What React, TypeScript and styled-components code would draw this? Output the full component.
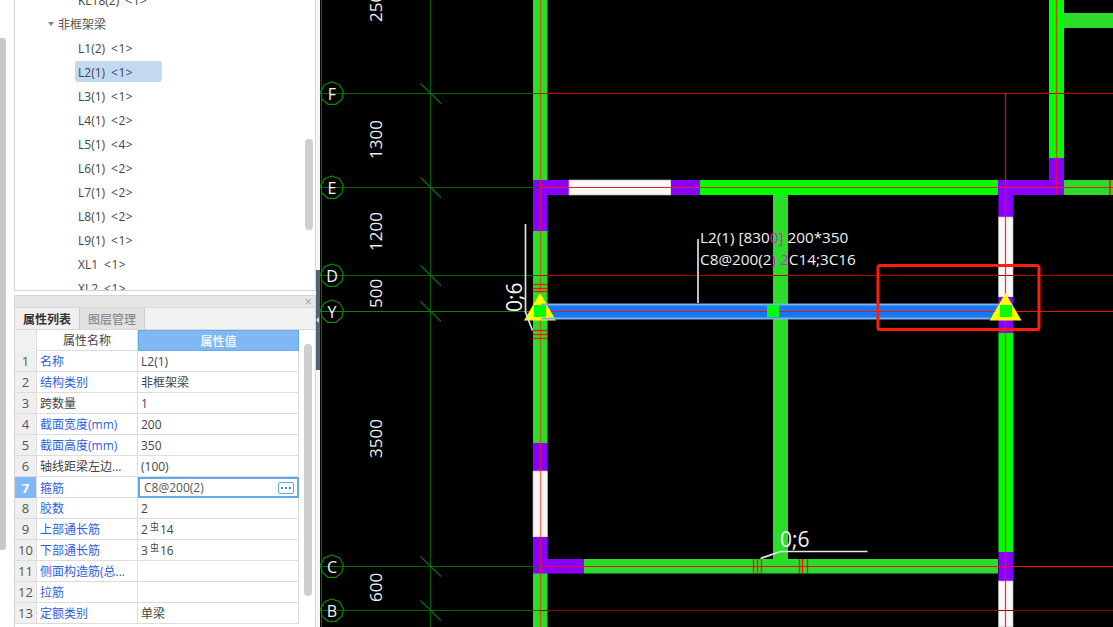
import React from "react";
import styled, { createGlobalStyle } from "styled-components";

const GlobalStyle = createGlobalStyle`
  html, body {
    margin: 0;
    padding: 0;
    width: 100%;
    height: 100%;
    overflow: hidden;
    background: #fff;
  }
  #root {
    height: 100%;
  }
`;

const UI_FONT = `"Open Sans", "Noto Sans CJK SC", sans-serif`;
const CAD_FONT = `"Open Sans", sans-serif`;

const GREEN = "#2bdc2b";
const LIME = "#00ff00";
const PURPLE = "#8a00ff";
const WHITE = "#f8f8f8";

const treeItems = [
  "L1(2)",
  "L2(1)",
  "L3(1)",
  "L4(1)",
  "L5(1)",
  "L6(1)",
  "L7(1)",
  "L8(1)",
  "L9(1)",
  "XL1",
  "XL2",
];
const treeCounts = [1, 1, 1, 2, 4, 2, 2, 2, 1, 1, 1];

type PropRow = { name: string; value?: React.ReactNode; plain?: boolean };

const Rebar = ({ count, size }: { count: number; size: number }) => (
  <>
    {count}
    <RebarMark>虫</RebarMark>
    {size}
  </>
);

const propRows: PropRow[] = [
  { name: "名称", value: "L2(1)" },
  { name: "结构类别", value: "非框架梁" },
  { name: "跨数量", value: "1", plain: true },
  { name: "截面宽度(mm)", value: "200" },
  { name: "截面高度(mm)", value: "350" },
  { name: "轴线距梁左边...", value: "(100)", plain: true },
  { name: "箍筋", value: "C8@200(2)" },
  { name: "胶数", value: "2" },
  { name: "上部通长筋", value: <Rebar count={2} size={14} /> },
  { name: "下部通长筋", value: <Rebar count={3} size={16} /> },
  { name: "侧面构造筋(总..." },
  { name: "拉筋" },
  { name: "定额类别", value: "单梁" },
];

// wall and beam pieces, page coordinates: [from, to, colour]
const leftWall: [number, number, string][] = [
  [0, 180, GREEN],
  [180, 231, PURPLE],
  [231, 443, GREEN],
  [443, 471, PURPLE],
  [471, 537, WHITE],
  [537, 573, PURPLE],
  [573, 627, GREEN],
];
const rightWall: [number, number, string][] = [
  [195, 217, PURPLE],
  [217, 297, WHITE],
  [297, 333, PURPLE],
  [333, 552, LIME],
  [552, 581, PURPLE],
  [581, 627, WHITE],
];
const beamE: [number, number, string][] = [
  [533, 569, PURPLE],
  [569, 671, WHITE],
  [671, 700, PURPLE],
  [700, 998, LIME],
  [998, 1064, PURPLE],
  [1064, 1113, GREEN],
];
const beamC: [number, number, string][] = [
  [533, 584, PURPLE],
  [584, 998, GREEN],
];

const axes = [
  { label: "F", y: 93.5 },
  { label: "E", y: 187.5 },
  { label: "D", y: 275.5 },
  { label: "Y", y: 311.5, bright: true },
  { label: "C", y: 566.5 },
  { label: "B", y: 610.5 },
];

const redLines = [
  { y: 93.5, color: "#c80000" },
  { y: 187.5, color: "#f02020" },
  { y: 275.5, color: "#b80000" },
  { y: 311.5, color: "#e00000" },
  { y: 566.5, color: "#e81010" },
  { y: 610.5, color: "#900000" },
];

const dims = [
  { text: "2500", y: 22 },
  { text: "1300", y: 159 },
  { text: "1200", y: 251 },
  { text: "500", y: 308 },
  { text: "3500", y: 458 },
  { text: "600", y: 602 },
];

const nonagon = (cx: number, cy: number, r: number) =>
  Array.from({ length: 9 }, (_, i) => {
    const a = (i / 9) * Math.PI * 2 - Math.PI / 2;
    return `${(cx + r * Math.cos(a)).toFixed(1)},${(cy + r * Math.sin(a)).toFixed(1)}`;
  }).join(" ");

const Marker = ({ x, squareX }: { x: number; squareX: number }) => (
  <>
    <polygon
      points={`${x},293 ${x - 16},320.5 ${x + 16},320.5`}
      fill="#ffff00"
    />
    <rect x={squareX} y={305} width={12} height={12} fill={LIME} />
  </>
);

const wallEdge = (color: string) =>
  color === WHITE ? { stroke: "#b4b4b4", strokeWidth: 0.7 } : {};

const CadDrawing = () => (
  <svg width="793" height="627" viewBox="320 0 793 627" style={{ display: "block" }}>
    <rect x="320" y="0" width="793" height="627" fill="#000" />

    {/* upper right wall and stub */}
    <rect x="1064" y="13" width="49" height="15" fill={GREEN} />
    <rect x="1049" y="0" width="15" height="158" fill={LIME} />
    <rect x="1049" y="158" width="15" height="30" fill={PURPLE} />

    {/* middle column */}
    <rect x="773" y="189" width="15" height="371" fill={GREEN} />

    {leftWall.map(([from, to, color]) => (
      <rect key={from} x="533" y={from} width="14.5" height={to - from} fill={color} {...wallEdge(color)} />
    ))}
    {rightWall.map(([from, to, color]) => (
      <rect key={from} x="998.5" y={from} width="14.5" height={to - from} fill={color} {...wallEdge(color)} />
    ))}
    {beamE.map(([from, to, color]) => (
      <rect key={from} x={from} y="180" width={to - from} height="15" fill={color} {...wallEdge(color)} />
    ))}
    {beamC.map(([from, to, color]) => (
      <rect key={from} x={from} y="559" width={to - from} height="14.5" fill={color} />
    ))}

    {/* green grid */}
    <line x1="321.5" y1="0" x2="321.5" y2="627" stroke="#0a640a" strokeWidth="1.2" />
    <line x1="430.5" y1="0" x2="430.5" y2="627" stroke="#0a5a0a" strokeWidth="1.2" />
    {axes.map((a) => (
      <g key={a.label}>
        <line
          x1="320"
          y1={a.y}
          x2="540"
          y2={a.y}
          stroke={a.bright ? "#118011" : "#0a640a"}
          strokeWidth="1.2"
        />
        <line x1="420.5" y1={a.y - 10} x2="441" y2={a.y + 10} stroke="#0a700a" strokeWidth="1.2" />
        <polygon
          points={nonagon(332, a.y, 11.5)}
          fill="none"
          stroke="#0c8a0c"
          strokeWidth="1.2"
        />
        <CircleLabel x="332" y={a.y + 6}>
          {a.label}
        </CircleLabel>
      </g>
    ))}

    {/* red centre lines */}
    {redLines.map((l) => (
      <line key={l.y} x1="540" y1={l.y} x2="1113" y2={l.y} stroke={l.color} strokeWidth="1.2" />
    ))}
    <line x1="540.5" y1="0" x2="540.5" y2="627" stroke="#ff2000" strokeOpacity="0.62" strokeWidth="1.3" />
    <line x1="1005.5" y1="93" x2="1005.5" y2="627" stroke="#ff1010" strokeOpacity="0.85" strokeWidth="1.3" />
    <line x1="1056.5" y1="0" x2="1056.5" y2="195" stroke="#ff1010" strokeOpacity="0.75" strokeWidth="1.3" />
    <line x1="1110" y1="180" x2="1110" y2="195" stroke="#f01010" strokeWidth="1.5" />

    {/* rebar ticks */}
    {[284.5, 288.5, 291.5, 330.5, 334.5, 338.5].map((y) => (
      <line key={y} x1="533" y1={y} x2="547" y2={y} stroke="#ff1010" strokeWidth="1.3" />
    ))}
    {[753.5, 757.5, 761.5, 799.5, 802.5, 807.5].map((x) => (
      <line key={x} x1={x} y1="559" x2={x} y2="573" stroke="#ff1010" strokeWidth="1.3" />
    ))}

    {/* selected beam L2(1) */}
    <rect x="547" y="304" width="452" height="15" fill="#1478f5" />
    <line x1="547" y1="311.5" x2="1113" y2="311.5" stroke="#f01010" />
    <Marker x={540} squareX={534} />
    <Marker x={1005.5} squareX={1000} />
    <rect x="541" y="303.5" width="458" height="2" fill="#7db0e8" />
    <rect x="541" y="317.5" width="449" height="2" fill="#7db0e8" />
    <rect x="767" y="305" width="12" height="12" fill={LIME} />

    {/* leaders */}
    <polyline points="525.5,224 525.5,312 532.5,330.5" fill="none" stroke="#e0e0e0" strokeWidth="1.7" />
    <line x1="698" y1="239" x2="698" y2="303" stroke="#e0e0e0" strokeWidth="1.7" />
    <polyline points="760.5,558.5 780.5,551.5 867.5,551.5" fill="none" stroke="#e8e8e8" strokeWidth="1.7" />

    {dims.map((d) => (
      <VerticalText key={d.text} transform={`translate(382 ${d.y}) rotate(-90)`}>
        {d.text}
      </VerticalText>
    ))}

    <BigText transform="translate(522 312) rotate(-90)">0;6</BigText>
    <BigText x="780" y="547">
      0;6
    </BigText>

    <BeamText x="700" y="243">
      L2(1) [830<Tint>0]</Tint> 200*350
    </BeamText>
    <BeamText x="700" y="265">
      C8@200(2<Tint>) 2</Tint>C14;3C16
    </BeamText>

    <rect
      x="878"
      y="265.5"
      width="161"
      height="64"
      rx="2"
      fill="none"
      stroke="#fe1e10"
      strokeWidth="3"
    />
  </svg>
);

export default function App() {
  return (
    <Page>
      <GlobalStyle />
      <Sidebar>
        <Rail>
          <RailThumb />
        </Rail>
        <Panels>
          <TreePanel>
            <TreeList>
              <TreeRow>
                <TreeLabel>KL18(2)</TreeLabel>
                <TreeCount>&lt;1&gt;</TreeCount>
              </TreeRow>
              <GroupRow>
                <Caret />
                非框架梁
              </GroupRow>
              {treeItems.map((item, i) => (
                <TreeRow key={item}>
                  <TreeLabel>{item}</TreeLabel>
                  <TreeCount>&lt;{treeCounts[i]}&gt;</TreeCount>
                  {item === "L2(1)" && <Highlight />}
                </TreeRow>
              ))}
            </TreeList>
            <TreeThumb />
          </TreePanel>

          <PropPanel>
            <PanelHead>×</PanelHead>
            <Tabs>
              <Tab $active>属性列表</Tab>
              <Tab>图层管理</Tab>
            </Tabs>
            <TableWrap>
              <Table>
                <HeadRow>
                  <NumCell $head />
                  <HeadName>属性名称</HeadName>
                  <HeadValue>属性值</HeadValue>
                </HeadRow>
                {propRows.map((row, i) => (
                  <Row key={row.name}>
                    <NumCell $active={i === 6}>{i + 1}</NumCell>
                    <NameCell $plain={row.plain}>{row.name}</NameCell>
                    {i === 6 ? (
                      <EditCell>
                        {row.value}
                        <MoreButton>
                          <i />
                          <i />
                          <i />
                        </MoreButton>
                      </EditCell>
                    ) : (
                      <ValueCell>{row.value}</ValueCell>
                    )}
                  </Row>
                ))}
              </Table>
              <TableThumb />
            </TableWrap>
          </PropPanel>
        </Panels>
      </Sidebar>
      <Splitter>
        <SplitGrip />
      </Splitter>
      <Canvas>
        <CadDrawing />
      </Canvas>
    </Page>
  );
}

const Page = styled.div`
  display: flex;
  width: 1113px;
  height: 627px;
  overflow: hidden;
  font-family: ${UI_FONT};
  font-size: 12px;
  color: #444;
`;

const Sidebar = styled.div`
  display: flex;
  width: 316px;
  flex: none;
  background: #fff;
`;

const Rail = styled.div`
  width: 14px;
  flex: none;
  padding-top: 38px;
  box-sizing: border-box;
`;

const RailThumb = styled.div`
  width: 6px;
  height: 512px;
  background: #c9c9c9;
  border-radius: 0 3px 3px 0;
`;

const Panels = styled.div`
  flex: 1;
  display: flex;
  flex-direction: column;
  min-width: 0;
`;

const TreePanel = styled.div`
  position: relative;
  height: 291px;
  flex: none;
  overflow: hidden;
  border: 1px solid #d4d4d4;
  border-top: none;
  box-sizing: border-box;
`;

const TreeList = styled.div`
  margin-top: -12px;
`;

const TreeRow = styled.div`
  position: relative;
  height: 24px;
  display: flex;
  align-items: center;
  padding-left: 63px;
`;

const GroupRow = styled.div`
  height: 24px;
  display: flex;
  align-items: center;
  padding-left: 33px;
  gap: 4px;
  color: #555;
`;

const Caret = styled.span`
  width: 0;
  height: 0;
  border-left: 3px solid transparent;
  border-right: 3px solid transparent;
  border-top: 4px solid #808080;
`;

const TreeLabel = styled.span`
  position: relative;
  z-index: 1;
`;

const TreeCount = styled.span`
  position: relative;
  z-index: 1;
  margin-left: 6px;
  letter-spacing: 0.5px;
`;

const Highlight = styled.div`
  position: absolute;
  left: 60px;
  top: 1px;
  width: 87px;
  height: 21px;
  border-radius: 3px;
  background: #c2d9f1;
`;

const TreeThumb = styled.div`
  position: absolute;
  left: 290px;
  top: 139px;
  width: 8px;
  height: 91px;
  border-radius: 4px;
  background: #cfcfcf;
`;

const PropPanel = styled.div`
  flex: 1;
  margin-top: 4px;
  display: flex;
  flex-direction: column;
  min-height: 0;
  border-left: 1px solid #d4d4d4;
  border-right: 1px solid #d4d4d4;
  overflow: hidden;
`;

const PanelHead = styled.div`
  height: 11px;
  flex: none;
  background: #e6e6e6;
  border-top: 1px solid #d4d4d4;
  text-align: right;
  padding-right: 3px;
  font-family: "Liberation Sans", sans-serif;
  font-size: 13px;
  line-height: 11px;
  color: #aaa;
`;

const Tabs = styled.div`
  display: flex;
  height: 23px;
  flex: none;
  background: #f2f2f2;
  border-top: 1px solid #d8d8d8;
  border-bottom: 1px solid #d8d8d8;
  box-sizing: border-box;
`;

const Tab = styled.div<{ $active?: boolean }>`
  width: 65px;
  display: flex;
  align-items: center;
  justify-content: center;
  box-sizing: border-box;
  border-right: 1px solid #ccc;
  background: ${(p) => (p.$active ? "#f0f0f0" : "#e2e2e2")};
  color: ${(p) => (p.$active ? "#333" : "#8c8c8c")};
  font-weight: ${(p) => (p.$active ? 700 : 500)};
`;

const TableWrap = styled.div`
  position: relative;
  flex: 1;
  min-height: 0;
`;

const Table = styled.div`
  width: 284px;
`;

const Row = styled.div`
  display: grid;
  grid-template-columns: 22px 101px 161px;
  height: 21px;
  box-sizing: border-box;
  border-bottom: 1px solid #dcdcdc;
`;

const HeadRow = styled(Row)`
  border-bottom: none;
`;

const NumCell = styled.div<{ $active?: boolean; $head?: boolean }>`
  display: flex;
  align-items: center;
  justify-content: center;
  border-right: 1px solid #dcdcdc;
  background: ${(p) => (p.$active ? "#7fb8f5" : p.$head ? "#f2f2f2" : "#efefef")};
  color: ${(p) => (p.$active ? "#fff" : "#555")};
  font-size: 13px;
  font-weight: ${(p) => (p.$active ? 700 : 400)};
`;

const HeadName = styled.div`
  display: flex;
  align-items: center;
  justify-content: center;
  border-right: 1px solid #dcdcdc;
  border-bottom: 1px solid #dcdcdc;
  color: #444;
`;

const HeadValue = styled.div`
  display: flex;
  align-items: center;
  justify-content: center;
  background: #7fb8f5;
  border: 1px solid #6aa8e6;
  box-sizing: border-box;
  color: #fff;
  font-weight: 500;
`;

const NameCell = styled.div<{ $plain?: boolean }>`
  display: flex;
  align-items: center;
  padding-left: 3px;
  white-space: nowrap;
  overflow: hidden;
  border-right: 1px solid #dcdcdc;
  color: ${(p) => (p.$plain ? "#444" : "#2d5fdc")};
`;

const ValueCell = styled.div`
  display: flex;
  align-items: center;
  padding-left: 3px;
  border-right: 1px solid #dcdcdc;
  color: #444;
`;

const EditCell = styled.div`
  display: flex;
  align-items: center;
  justify-content: space-between;
  box-sizing: border-box;
  height: 21px;
  padding: 0 3px 0 4px;
  border: 2px solid #62a8ea;
  color: #555;
`;

const MoreButton = styled.span`
  width: 16px;
  height: 12px;
  box-sizing: border-box;
  display: flex;
  align-items: center;
  justify-content: center;
  gap: 2px;
  border: 1px solid #62a8ea;
  border-radius: 2px;

  i {
    width: 2px;
    height: 2px;
    background: #3d8fe0;
  }
`;

const RebarMark = styled.span`
  font-size: 9px;
  position: relative;
  top: -3px;
  margin: 0 1px 0 2px;
`;

const TableThumb = styled.div`
  position: absolute;
  left: 289px;
  top: 14px;
  width: 8px;
  height: 252px;
  border-radius: 4px;
  background: #cfcfcf;
`;

const Splitter = styled.div`
  position: relative;
  width: 4px;
  flex: none;
  background: #f5f5f5;
`;

const SplitGrip = styled.div`
  position: absolute;
  left: 0;
  top: 270px;
  width: 4px;
  height: 100px;
  background: #56626e;

  &::after {
    content: "";
    position: absolute;
    left: 0;
    top: 47px;
    border-top: 3px solid transparent;
    border-bottom: 3px solid transparent;
    border-right: 3px solid #d8dde2;
  }
`;

const Canvas = styled.div`
  flex: 1;
  min-width: 0;
  background: #000;
`;

const CircleLabel = styled.text`
  font-family: ${CAD_FONT};
  font-size: 16px;
  fill: #f4f4f4;
  text-anchor: middle;
`;

const VerticalText = styled.text`
  font-family: ${CAD_FONT};
  font-size: 17px;
  fill: #eee;
`;

const BigText = styled.text`
  font-family: ${CAD_FONT};
  font-size: 21px;
  fill: #f4f4f4;
`;

const BeamText = styled.text`
  font-family: ${CAD_FONT};
  font-size: 15.3px;
  fill: #f0f0f0;
`;

const Tint = styled.tspan`
  fill: #d028d0;
`;
